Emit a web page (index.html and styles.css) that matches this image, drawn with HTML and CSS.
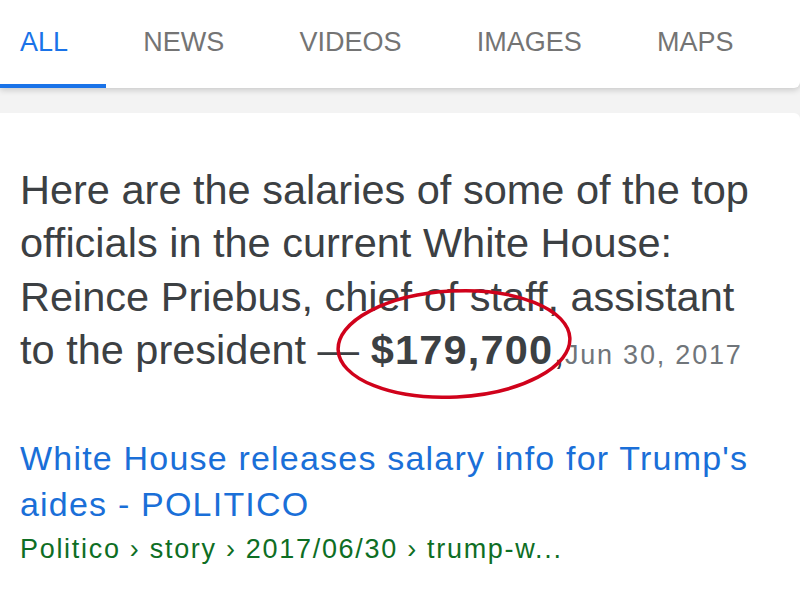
FILE: index.html
```html
<!DOCTYPE html>
<html>
<head>
<meta charset="utf-8">
<link rel="stylesheet" href="styles.css">
</head>
<body>
<div class="page">
  <nav class="tabs">
    <div class="tab active">ALL</div>
    <div class="tab">NEWS</div>
    <div class="tab">VIDEOS</div>
    <div class="tab">IMAGES</div>
    <div class="tab">MAPS</div>
  </nav>
  <div class="gap"></div>
  <main class="card">
    <p class="snippet">Here are the salaries of some of the top<br>officials in the current White House:<br>Reince Priebus, chief of staff, assistant<br>to the president — <b class="amount">$179,700</b>,<span class="date">Jun 30, 2017</span></p>
    <a class="title" href="#">White House releases salary info for Trump's<br>aides - POLITICO</a>
    <div class="crumbs">Politico › story › 2017/06/30 › trump-w...</div>
    <svg class="circle" width="260" height="130" viewBox="0 0 260 130">
      <ellipse cx="130" cy="64" rx="116" ry="53" transform="rotate(-3 130 64)" fill="none" stroke="#d0021b" stroke-width="3.5"/>
    </svg>
  </main>
</div>
</body>
</html>
```

FILE: styles.css
```css
* { box-sizing: border-box; }
html, body { margin: 0; padding: 0; }
body {
  width: 800px;
  height: 600px;
  overflow: hidden;
  background: #f2f2f2;
  font-family: "Liberation Sans", Arial, Helvetica, sans-serif;
}
.page { display: flex; flex-direction: column; height: 600px; }
.tabs {
  flex: 0 0 88px;
  display: flex;
  height: 88px;
  background: #fff;
  box-shadow: 0 2px 6px rgba(0,0,0,0.18);
  border-bottom-right-radius: 6px;
  position: relative;
  z-index: 1;
  overflow: hidden;
}
.tab {
  flex: 0 0 auto;
  font-size: 27px;
  color: #747474;
  padding: 29px 37.6px 0;
  height: 88px;
  border-bottom: 4px solid transparent;
  line-height: 27px;
  white-space: nowrap;
}
.tab:first-child { margin-left: -17.5px; }
.tab.active { color: #1a73e8; border-bottom-color: #1a73e8; }
.gap { flex: 0 0 25px; background: #f3f3f3; }
.card {
  flex: 1;
  background: #fff;
  padding: 50px 20px 0;
  position: relative;
  border-top-right-radius: 6px;
}
.snippet {
  margin: 0;
  font-size: 41.5px;
  line-height: 53.4px;
  color: #3c4043;
  white-space: nowrap;
}
.amount { font-weight: bold; letter-spacing: 1.2px; }
.date { font-size: 27px; color: #70757a; letter-spacing: 1.8px; }
.title {
  display: block;
  margin-top: 52.6px;
  font-size: 34px;
  line-height: 46px;
  color: #1a6fd8;
  text-decoration: none;
  letter-spacing: 1.2px;
  white-space: nowrap;
}
.crumbs {
  margin-top: 2px;
  font-size: 27px;
  line-height: 40px;
  color: #0e6e24;
  letter-spacing: 1.7px;
  white-space: nowrap;
}
.circle {
  position: absolute;
  left: 324px;
  top: 167px;
}
```
